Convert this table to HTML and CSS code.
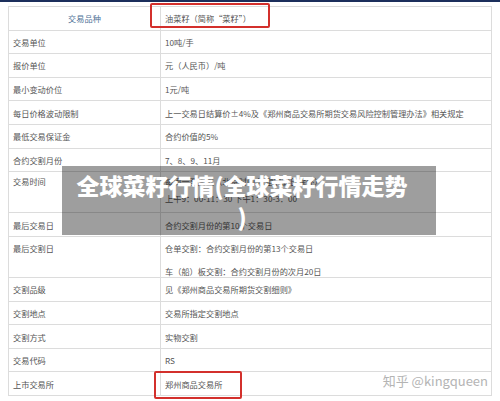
FILE: index.html
```html
<!DOCTYPE html>
<html lang="zh-CN">
<head>
	<meta charset="UTF-8">
	<title>全球菜籽行情</title>
	<link rel="stylesheet" href="styles.css">
</head>
<body>
	<div class="top-bar"></div>
	<div class="page">
		<div class="spec">
			<div class="cell cell-head">交易品种</div>
			<div class="cell">油菜籽（简称“菜籽”）</div>
			<div class="cell">交易单位</div>
			<div class="cell">10吨/手</div>
			<div class="cell">报价单位</div>
			<div class="cell">元（人民币）/吨</div>
			<div class="cell">最小变动价位</div>
			<div class="cell">1元/吨</div>
			<div class="cell">每日价格波动限制</div>
			<div class="cell">上一交易日结算价±4%及《郑州商品交易所期货交易风险控制管理办法》相关规定</div>
			<div class="cell">最低交易保证金</div>
			<div class="cell">合约价值的5%</div>
			<div class="cell">合约交割月份</div>
			<div class="cell">7、8、9、11月</div>
			<div class="cell cell-time">交易时间</div>
			<div class="cell cell-time">
				<p>每周一至周五（北京时间 法定节假日除外）</p>
				<p>上午9：00-11：30 下午1：30-3：00</p>
			</div>
			<div class="cell">最后交易日</div>
			<div class="cell">合约交割月份的第10个交易日</div>
			<div class="cell cell-tall">最后交割日</div>
			<div class="cell cell-tall">
				<p>仓单交割：合约交割月份的第13个交易日</p>
				<p>车（船）板交割：合约交割月份的次月20日</p>
			</div>
			<div class="cell">交割品级</div>
			<div class="cell">见《郑州商品交易所期货交割细则》</div>
			<div class="cell">交割地点</div>
			<div class="cell">交易所指定交割地点</div>
			<div class="cell">交割方式</div>
			<div class="cell">实物交割</div>
			<div class="cell">交易代码</div>
			<div class="cell">RS</div>
			<div class="cell">上市交易所</div>
			<div class="cell">郑州商品交易所</div>
		</div>

		<!-- 红框标注 -->
		<div class="mark mark-top"></div>
		<div class="mark mark-bottom"></div>

		<div class="caption">全球菜籽行情(全球菜籽行情走势<br>)</div>
		<div class="watermark">知乎 @kingqueen</div>
	</div>
</body>
</html>
```

FILE: styles.css
```css
*{
	margin: 0;
	padding: 0;
	box-sizing: border-box;
}
body{
	width: 500px;
	height: 401px;
	overflow: hidden;
	background-color: #fff;
	font-family: "Noto Sans CJK SC", "Noto Sans", sans-serif;
}
.top-bar{
	height: 2px;
	background-color: #1c2f5c;
}
.page{
	position: relative;
	padding: 4px 8px 0;
}
.spec{
	display: grid;
	grid-template-columns: 151px 1fr;
	grid-template-rows: repeat(7, 1fr) 1.78fr 1fr 1.78fr repeat(5, 1fr);
	gap: 1px;
	height: 390px;
	border: 1px solid #dcdcdc;
	background-color: #dcdcdc;
}
.cell{
	display: flex;
	align-items: center;
	padding: 0 4px;
	overflow: hidden;
	background-color: #fff;
	font-size: 8.2px;
	color: #555;
	white-space: nowrap;
}
.cell-head{
	justify-content: center;
	color: #4d6f96;
}
.cell-time{
	display: block;
	padding-top: 1px;
	line-height: 17px;
}
.cell-tall{
	display: block;
	line-height: 23px;
}
.mark{
	position: absolute;
	border: 2px solid #d3302c;
	border-radius: 2px;
}
.mark-top{
	left: 150px;
	top: 1px;
	width: 120px;
	height: 25px;
}
.mark-bottom{
	left: 154px;
	top: 369px;
	width: 88px;
	height: 28px;
}
.caption{
	position: absolute;
	left: 62px;
	top: 164px;
	width: 374px;
	height: 69px;
	padding: 4px 18px 0 4px;
	background-color: rgba(0,0,0,.38);
	font-size: 23px;
	font-weight: 900;
	line-height: 31px;
	color: #fff;
	text-align: center;
}
.watermark{
	position: absolute;
	right: 12px;
	top: 369px;
	font-family: "Noto Sans CJK SC", "Noto Sans", sans-serif;
	font-size: 13px;
	color: #b4b4b4;
	text-shadow: 0 0 2px #fff, 0 0 1px #fff;
}
```
